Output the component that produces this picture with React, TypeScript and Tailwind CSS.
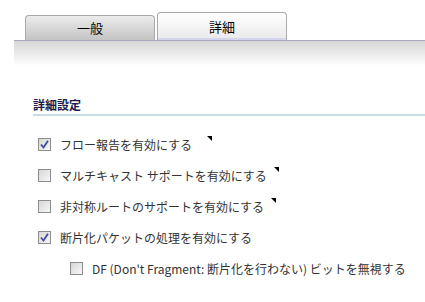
import React from 'react';

const font = { fontFamily: '"Noto Sans CJK JP", "Noto Sans", sans-serif' };

function Box({ checked }: { checked?: boolean }) {
  return (
    <span className="flex h-[13px] w-[13px] shrink-0 items-center justify-center border border-[#8c8c8c] bg-gradient-to-br from-[#d6d6d6] to-[#f8f8f8]">
      {checked && (
        <svg width="9" height="9" viewBox="0 0 9 9">
          <path d="M1 4.5 L3.5 7.5 L8 0.8" fill="none" stroke="#3f4f9a" strokeWidth="1.8" />
        </svg>
      )}
    </span>
  );
}

function Marker({ wide }: { wide?: boolean }) {
  return (
    <span
      className={`${wide ? 'ml-[15px]' : 'ml-[7px]'} -mt-[12px] h-0 w-0 border-t-[5px] border-l-[5px] border-t-black border-l-transparent`}
    />
  );
}

function Row({ label, checked, marker, wide, indent }: { label: string; checked?: boolean; marker?: boolean; wide?: boolean; indent?: boolean }) {
  return (
    <div className={`flex h-[31px] items-center ${indent ? 'pl-[70px]' : 'pl-[38px]'}`}>
      <Box checked={checked} />
      <span className="ml-[9px] text-[12px] text-[#333]">{label}</span>
      {marker && <Marker wide={wide} />}
    </div>
  );
}

export default function App() {
  return (
    <div className="h-[302px] w-[425px] overflow-hidden bg-white" style={font}>
      <div className="flex items-end gap-[2px] pl-[25px] pt-[12px]">
        <div className="flex h-[25px] w-[130px] items-center justify-center rounded-t-[4px] border border-b-0 border-[#a9a9a9] bg-gradient-to-b from-[#ececec] to-[#c4c4c4] text-[13px] text-black">
          一般
        </div>
        <div className="flex h-[28px] w-[130px] items-center justify-center rounded-t-[4px] border border-b-0 border-[#a9a9a9] bg-gradient-to-b from-white to-[#e9e9e9] text-[13px] text-black shadow-[inset_0_-2px_0_#d4d4ec]">
          詳細
        </div>
      </div>
      <div className="ml-[14px] h-[26px] border-t border-[#a8a8bc] bg-gradient-to-b from-[#d6d6d6] to-white" />
      <div className="pl-[33px] pt-[31px]">
        <div className="border-b-2 border-[#cadde6] pb-[1px] text-[12px] leading-[16px] font-bold text-[#1c1c4c]">詳細設定</div>
      </div>
      <div className="pt-[13px]">
        <Row label="フロー報告を有効にする" checked marker wide />
        <Row label="マルチキャスト サポートを有効にする" marker />
        <Row label="非対称ルートのサポートを有効にする" marker />
        <Row label="断片化パケットの処理を有効にする" checked />
        <Row label="DF (Don't Fragment: 断片化を行わない) ビットを無視する" indent />
      </div>
    </div>
  );
}
